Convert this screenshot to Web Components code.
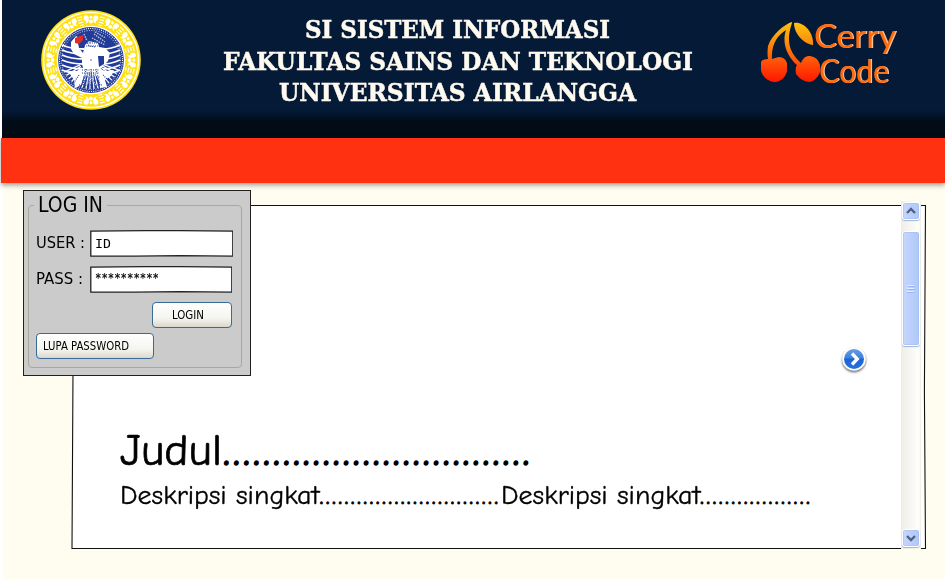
<!DOCTYPE html>
<html lang="id">
<head>
<meta charset="utf-8">
<title>SI Sistem Informasi</title>
<style>
html,body{margin:0;height:100%;overflow:hidden;background:#fff}
</style>
</head>
<body>
<app-page></app-page>
<script>
const define = (name, html, ready) => customElements.define(name, class extends HTMLElement {
  connectedCallback() {
    if (this.shadowRoot) return;
    this.attachShadow({mode: 'open'}).innerHTML = html;
    if (ready) ready.call(this, this.shadowRoot);
  }
});

/* Text stretched to an exact advance width, by glyph scale or by letter spacing. */
define('fit-text', `<style>
:host{display:inline-block;white-space:pre;vertical-align:baseline}
span{display:inline-block;transform-origin:0 50%}
</style><span><slot></slot></span>`, function (root) {
  const s = root.querySelector('span');
  const want = +this.getAttribute('width');
  const have = s.getBoundingClientRect().width;
  this.style.width = want + 'px';
  if (this.hasAttribute('spread')) s.style.letterSpacing = (want - have) / this.textContent.length + 'px';
  else s.style.transform = `scaleX(${want / have})`;
});

/* University seal: yellow ornamented ring round a blue medallion. */
define('uni-seal', `<style>:host{display:block;width:100px;height:100px}svg{display:block}</style>
<svg width="100" height="100" viewBox="-50 -50 100 100">
<circle r="49.8" fill="#ffe012"/><circle r="47.4" fill="none" stroke="#fff" stroke-width="1.4"/>
<g id="ring" fill="#fff" stroke="none"></g>
<circle r="33.6" fill="#223a98" stroke="#fff" stroke-width="1.4"/>
<circle r="31.5" fill="none" stroke="#fff" stroke-width="1.1" stroke-dasharray="1 1.2"/>
<circle r="29.5" fill="none" stroke="#fff" stroke-width=".8" stroke-dasharray="1 1.4"/>
<g id="wings" fill="none" stroke="#fff" stroke-width="1.9"></g>
<g id="rays" stroke="#fff" stroke-width="1.3"></g>
<path fill="#fff" d="M-20-11 -20-18 -15-24 -10-21 -13-17 -12-12 -8-7 -6-15 -2-19 7-17 8-13 14-12 19-7 17 1 12 6 9 9 14 11 23 10 20 16 14 20 16 27 9 28 8 20 3 12 -4 12 -8 19 -10 25 -16 28 -17 20 -23 11 -14 11 -8 8 -9 4 -9-2 -17-6z"/>
<path fill="#223a98" d="M7-4H13V4L8 7z"/>
<g fill="none" stroke="#223a98" stroke-width="1.1" stroke-dasharray="1 1.2">
<path d="M-7-23-2-14 5-13M-1-25V-16M3-25 2-18M-8-17H8M-7-14H7M-9 10H8M-9 13H8M-8 17H9M-9 21H8M-12 25H11M-5 9-8 25M0 9V29M5 9 9 25M-12 15-18 24M12 15 18 21"/></g>
<g fill="none" stroke="#b7c1da" stroke-width="1.4" stroke-dasharray="1.5 1"><path d="M3-26 14-18M1-22 14-15M4-28 15-22M-7-26-4-19M-5 12 5 25M5 12-5 25"/></g>
<circle cx="0" cy="0" r=".7" fill="#223a98"/>
<path fill="#e32b22" d="M-16-22-11-24-8-25-8-20-12-16-16-17z"/>
</svg>`, root => {
  let ring = '', wings = '', rays = '';
  for (let i = 0; i < 12; i++) {
    ring += `<g transform="rotate(${i * 30})"><circle cx="-4.9" cy="-42.3" r="2.5"/><path d="M-7-40Q-3-39-6-36 0-38-3-43z"/><circle cx="4.9" cy="-42.3" r="2.5"/><path d="M7-40Q3-39 6-36 0-38 3-43z"/><circle cy="-42.8" r="1.5"/><circle cy="-38.5" r="1.9"/></g>
<g transform="rotate(${i * 30 + 15})" fill="none" stroke="#fff" stroke-width="1.2"><path d="M-2.6-44H2.6M-2.2-41.3H2.2M-2.6-38.6H2.6M-2-36H2"/></g>`;
  }
  for (let i = 0; i < 6; i++) {
    const y = -15 + i * 5;
    wings += `<path d="M-29 ${y}Q-20 ${y + 4}-7 ${y + 4}"/><path d="M29 ${y}Q20 ${y + 4} 12 ${y + 4}"/>`;
  }
  for (let a = 20; a <= 160; a += 8) rays += `<path d="M12 0H29" transform="rotate(${a})"/>`;
  root.getElementById('ring').innerHTML = ring;
  root.getElementById('wings').innerHTML = wings;
  root.getElementById('rays').innerHTML = rays;
});

define('cherry-logo', `<style>
:host{display:flex;width:140px;height:66px;align-items:flex-start}
svg{display:block;flex:none}
.t{margin:-4px 0 0 -6px;font:33px/34.5px Lato,sans-serif;color:#ff6b0b;text-shadow:1.3px .3px 0 #ffc19c}
.t div{height:34.5px;white-space:nowrap}
.c{padding-left:5px}
</style>
<svg width="60" height="62" viewBox="0 0 60 62"><defs><linearGradient id="g" gradientUnits="userSpaceOnUse" x1="0" y1="0" x2="0" y2="60"><stop offset="0" stop-color="#fdc40c"/><stop offset=".35" stop-color="#fd8b0b"/><stop offset=".65" stop-color="#ff5408"/><stop offset="1" stop-color="#ff1600"/></linearGradient></defs>
<g fill="url(#g)"><path d="M32 0C25 2 12 12 8 24Q7 31 8 37Q2 37 1 40V48C2 55 9 60 16 60 22 59 26 54 27 49L27 41Q25 35 19 35 15 36 12 37C11 22 18 13 26 8C21 23 29 36 37 43Q35 45 36 52 42 60 50 60 57 58 60 50V43Q58 35 50 34 44 33 41 41C31 32 25 21 32 1z"/><path d="M34 1C43-1 54 10 53 23 44 22 34 12 34 1z"/></g></svg>
<div class="t"><div><fit-text width="82">Cerry</fit-text></div><div class="c"><fit-text width="70">Code</fit-text></div></div>`);

define('site-header', `<style>
:host{display:grid;grid-template-columns:100px 1fr 140px;box-sizing:border-box;height:138px;margin-left:2px;padding:10px 45px 0 39px;background:linear-gradient(#041a36 110px,#03152b 115px,#010c18 121px,#010b15)}
h1{margin:0;padding-top:4px;display:flex;flex-direction:column;align-items:center;margin-left:14px;font:bold 25px/31.5px "DejaVu Serif",serif;color:#fffaf0;-webkit-text-stroke:.5px #fffaf0}
cherry-logo{padding-top:12px}
</style>
<uni-seal></uni-seal>
<h1><fit-text width="305">SI SISTEM INFORMASI</fit-text><fit-text width="470">FAKULTAS SAINS DAN TEKNOLOGI</fit-text><fit-text width="357">UNIVERSITAS AIRLANGGA</fit-text></h1>
<cherry-logo></cherry-logo>`);

define('nav-band', `<style>:host{display:block;position:relative;height:45px;margin-left:1px;background:#ff3110;box-shadow:0 2px 5px #0006}</style>`);

define('text-box', `<style>
:host{display:block;position:relative;height:27px;font:12.5px/26px "DejaVu Sans Mono",monospace;color:#000}
svg{display:block;width:100%;height:100%}
div{position:absolute;left:5px;top:.5px}
:host([masked]) div{top:-1.5px;-webkit-text-stroke:.2px #000}
</style><svg viewBox="0 0 143 27" preserveAspectRatio="none"><path d="M.8 1.2 55 .7H90L142.3 1.2V26.2L90 25.6 45 26.2.8 26z" fill="#fff" stroke="#222" stroke-width="1.3"/></svg><div><slot></slot></div>`);

define('xp-button', `<style>
:host{display:block}
button{box-sizing:border-box;width:100%;height:26px;margin:0;padding:0 0 0 6px;text-align:left;border:1.5px solid #396b99;border-radius:4px;background:linear-gradient(#fff,#f4f4ef 65%,#dcd7cb);font:11.5px/23px "DejaVu Sans Condensed",sans-serif;color:#000;display:block}
:host([wide]) button{padding-left:19px}
</style><button><slot></slot></button>`);

define('login-card', `<style>
:host{display:block;box-sizing:border-box;width:228px;height:186px;font-family:"DejaVu Sans Condensed",sans-serif;color:#000;background:#cbcbcb;border:1px solid #202020;padding:4px 8px 7px 4px}
fieldset{box-sizing:border-box;height:173px;margin:0;min-width:0;padding:0 8px 0 7px;border:1px solid #aaa79b;border-radius:4px}
legend{height:21px;line-height:21px;font-size:20.5px;padding:0 4px;margin-left:-2px}
.row{display:grid;grid-template-columns:53.5px 1fr;align-items:center;height:27px;font-size:16.5px}
.u{margin-top:14px}.p{margin-top:9px;padding-right:1px}
.l{width:80px;margin:9px 1px 0 auto}.f{width:118px;margin-top:5px}
.row > span{line-height:24px;margin-top:-2px}
</style>
<fieldset><legend><fit-text width="65">LOG IN</fit-text></legend>
<div class="row u"><span><fit-text width="49">USER :</fit-text></span><text-box><fit-text width="16">ID</fit-text></text-box></div>
<div class="row p"><span><fit-text width="47">PASS :</fit-text></span><text-box masked><fit-text width="64">**********</fit-text></text-box></div>
<div class="l"><xp-button wide><fit-text width="32">LOGIN</fit-text></xp-button></div>
<div class="f"><xp-button><fit-text width="86">LUPA PASSWORD</fit-text></xp-button></div>
</fieldset>`);

define('scroll-bar', `<style>
:host{display:flex;flex-direction:column;width:20px;height:348px;background:linear-gradient(90deg,#eeede5,#f3f1ec 20%,#fefefb 90%,#eeede5);box-sizing:border-box;padding:1px 1px 0}
.b{box-sizing:border-box;width:18px;border:1px solid #fff;border-radius:3px;background:linear-gradient(90deg,#c8d6fb,#b7cefb 60%,#aec8f7);box-shadow:inset 0 0 0 .5px #9fbbe8,0 1px 1px #9cb4d7;display:grid;place-items:center}
.a{height:18px}.thumb{height:115px;margin-top:11px}.down{margin-top:auto;margin-bottom:2px}
svg{display:block}
</style>
<div class="b a"><svg width="12" height="10"><path d="M2 7 6 3 10 7" fill="none" stroke="#4d6185" stroke-width="2.3"/></svg></div>
<div class="b thumb"><svg width="10" height="10"><path d="M1 1.5H8M1 4.5H8M1 7.5H8M1.5 1V9" stroke="#e4eefe"/><path d="M1 2.5H8.5M1 5.5H8.5M1 8.5H8.5" stroke="#8cb0f8" stroke-width=".8"/></svg></div>
<div class="b a down"><svg width="12" height="10"><path d="M2 3 6 7 10 3" fill="none" stroke="#4d6185" stroke-width="2.3"/></svg></div>`);

define('next-button', `<style>:host{display:block;width:28px;height:30px}svg{display:block;overflow:visible}</style>
<svg width="28" height="30"><defs><linearGradient id="n" x1="0" y1="0" x2="0" y2="1"><stop offset="0" stop-color="#669ee8"/><stop offset=".45" stop-color="#3f80dc"/><stop offset=".5" stop-color="#1b64d4"/><stop offset="1" stop-color="#2870df"/></linearGradient><filter id="s" x="-30%" y="-30%" width="160%" height="160%"><feGaussianBlur stdDeviation="1.2"/></filter></defs>
<circle cx="14" cy="15.5" r="11.8" fill="#0009" filter="url(#s)"/><circle cx="14" cy="14" r="11.8" fill="#fff"/><circle cx="14" cy="14" r="10" fill="url(#n)"/><path d="M12 8.5 17.3 14 12 19.5" fill="none" stroke="#fff" stroke-width="3.3"/></svg>`);

define('content-panel', `<style>
:host{display:grid;grid-template-columns:830px 20px;grid-template-rows:348px;width:856px;height:348px;position:relative}
.frame{position:absolute;left:0;top:0;z-index:-1}
.body{display:flex;flex-direction:column;font-family:"Comic Sans MS","Comic Neue",Lato,sans-serif;color:#000}
.next{margin:144px 33px 0 auto}
h2{margin:48px 0 0 49px;font-weight:400;font-size:45px;line-height:54px;height:54px;-webkit-text-stroke:.7px #000}
p{margin:2px 0 0 49px;font-size:26px;line-height:34px;height:34px;white-space:nowrap;-webkit-text-stroke:.35px #000}
h2 [spread]{margin-left:1px;-webkit-text-stroke:1.5px #000}
p [spread]{-webkit-text-stroke:.8px #000}
</style>
<svg class="frame" width="856" height="348"><path d="M3 4.5 854.5 4.5 853.4 190 854.5 347.5 1 347.5 2 170z" fill="#fff" stroke="#111" stroke-width="1.1"/></svg>
<div class="body"><div class="next"><next-button></next-button></div>
<h2><fit-text width="102">Judul</fit-text><fit-text width="309.5" spread>...............................</fit-text></h2>
<p><fit-text width="199.5">Deskripsi singkat</fit-text><fit-text width="181" spread>.............................</fit-text><fit-text width="199.5">Deskripsi singkat</fit-text><fit-text width="112.2" spread>..................</fit-text></p></div>
<scroll-bar></scroll-bar>`);

define('app-page', `<style>
:host{display:flex;flex-direction:column;height:579px;background:linear-gradient(90deg,#fff 2px,#fffcf0 4px)}
main{position:relative;z-index:0;display:block;height:396px;box-sizing:border-box;padding:18px 0 0 71px}
login-card{position:absolute;left:23px;top:7px}
</style>
<site-header></site-header><nav-band></nav-band>
<main><content-panel></content-panel><login-card></login-card></main>`);
</script>
</body>
</html>
